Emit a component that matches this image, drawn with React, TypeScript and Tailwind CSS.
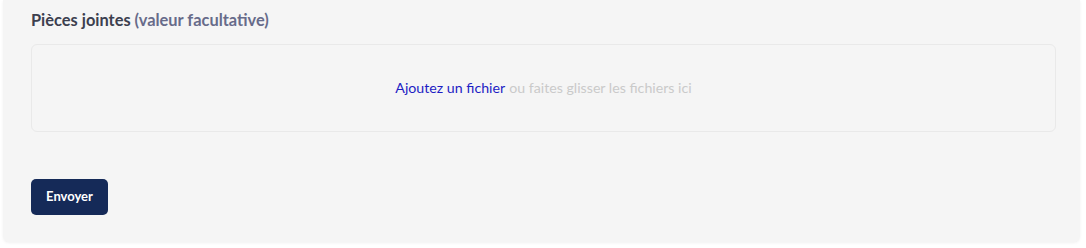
export default function App() {
  return (
    <div className="w-[1086px] h-[248px] bg-white font-['Lato','Liberation_Sans',sans-serif]">
      <div className="ml-[3px] w-[1077px] h-[242px] bg-[#f5f5f5] rounded-b-md shadow-[0_1px_3px_rgba(0,0,0,0.06)] pl-[28px] pr-[24px] pt-[10px]">
        <h3 className="text-[16.4px] font-bold leading-[20px] text-[#3c3f4f]">
          Pièces jointes <span className="text-[#676b8a]">(valeur facultative)</span>
        </h3>
        <div className="mt-[14px] h-[88px] rounded-md border border-[#e9e9e9] flex items-center justify-center text-[14.2px]">
          <a className="text-[#1d1dc4] cursor-pointer">Ajoutez un fichier</a>
          <span className="text-[#cacaca] ml-[4px]">ou faites glisser les fichiers ici</span>
        </div>
        <button className="mt-[47px] w-[77px] h-[36px] rounded-[5px] bg-[#152a58] text-white text-[13px] font-bold">
          Envoyer
        </button>
      </div>
    </div>
  );
}
